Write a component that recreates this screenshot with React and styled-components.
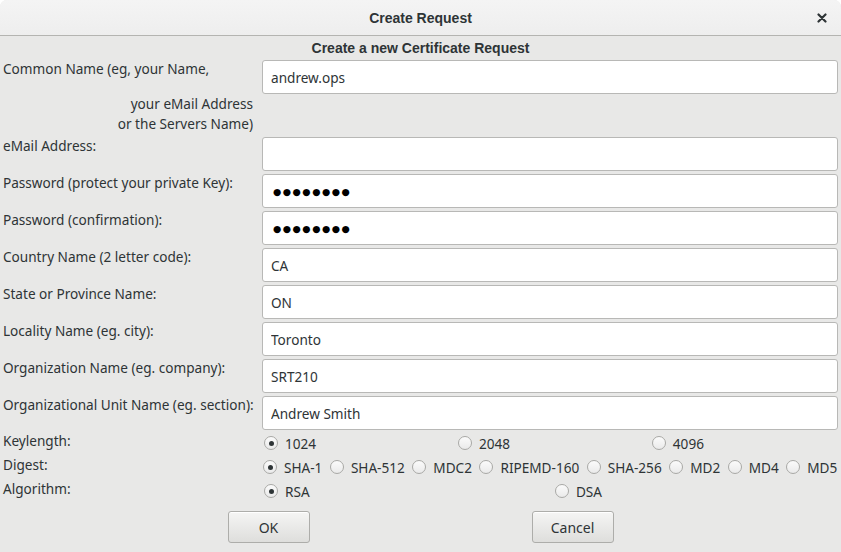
import styled, { createGlobalStyle } from "styled-components"

const Global = createGlobalStyle`
  html, body {
    margin: 0;
    padding: 0;
    background: #ffffff;
  }
  * { box-sizing: border-box; }
`

const Window = styled.div`
  width: 841px;
  height: 552px;
  background: #e8e8e7;
  border-radius: 7px 7px 0 0;
  overflow: hidden;
  font-family: "Noto Sans", "DejaVu Sans", sans-serif;
  font-size: 13.6px;
  color: #2e3436;
  display: flex;
  flex-direction: column;
`

const TitleBar = styled.div`
  height: 36px;
  flex: none;
  background: linear-gradient(#f4f4f4, #eeeeee);
  border-bottom: 1px solid #b4b4b1;
  display: grid;
  grid-template-columns: 1fr auto 1fr;
  align-items: center;
`

const Title = styled.div`
  grid-column: 2;
  font-family: "Liberation Sans", sans-serif;
  font-weight: bold;
  font-size: 14px;
  color: #2e3436;
`

const CloseButton = styled.div`
  grid-column: 3;
  justify-self: end;
  margin-right: 14px;
  display: flex;
  align-items: center;
`

const Heading = styled.div`
  text-align: center;
  font-family: "Liberation Sans", sans-serif;
  font-weight: bold;
  font-size: 14px;
  line-height: 18px;
  padding-top: 3px;
  margin-bottom: 3px;
`

const Form = styled.div`
  display: grid;
  grid-template-columns: 262px 1fr;
  row-gap: 3px;
  padding-right: 3px;
`

const Label = styled.div`
  padding-left: 3px;
  line-height: 17px;
  white-space: nowrap;
`

const LabelMore = styled.div`
  text-align: right;
  padding-right: 9px;
  line-height: 20px;
  margin-top: ${(p) => p.$gap || 0}px;
`

const Field = styled.input`
  height: 34px;
  width: 100%;
  border: 1px solid #b8b8b6;
  border-radius: 3px;
  background: #ffffff;
  padding: 0 ${(p) => (p.$secret ? "10px" : "8px")};
  font-family: ${(p) => (p.$secret ? `"DejaVu Sans"` : `"Noto Sans", "DejaVu Sans"`)}, sans-serif;
  font-size: ${(p) => (p.$secret ? "9.5px" : "13.6px")};
  letter-spacing: ${(p) => (p.$secret ? "1.5px" : "0")};
  color: ${(p) => (p.$secret ? "#000000" : "#2e3436")};
  outline: none;
`

const Options = styled.div`
  display: grid;
  grid-template-columns: 262px 1fr;
  grid-auto-rows: 24px;
  margin-top: 1px;
  padding-right: 3px;
`

const OptionLabel = styled.div`
  padding-left: 3px;
  line-height: 18px;
  align-self: start;
  padding-top: 1px;
`

const Choices = styled.div`
  display: ${(p) => (p.$cols ? "grid" : "flex")};
  grid-template-columns: ${(p) => (p.$cols ? `repeat(${p.$cols}, 1fr)` : "none")};
  align-items: center;
`

const Choice = styled.label`
  display: flex;
  align-items: center;
  gap: 7px;
  padding-left: ${(p) => (p.$packed ? 0 : 1)}px;
  margin-right: ${(p) => (p.$packed ? 6.5 : 0)}px;
  white-space: nowrap;
`

const Radio = styled.span`
  width: 14px;
  height: 14px;
  flex: none;
  border-radius: 50%;
  border: 1px solid #a9a9a6;
  background: linear-gradient(#fbfbfb, #eaeaea);
  display: flex;
  align-items: center;
  justify-content: center;
  margin-left: 1px;
  &::after {
    content: "";
    width: 5px;
    height: 5px;
    border-radius: 50%;
    background: #2e3436;
    display: ${(p) => (p.$on ? "block" : "none")};
  }
`

const Buttons = styled.div`
  width: 608px;
  margin: 8px auto 0;
  display: grid;
  grid-template-columns: 1fr 1fr;
  justify-items: center;
`

const Button = styled.button`
  width: 82px;
  height: 32px;
  border: 1px solid #adadaa;
  border-radius: 3px;
  background: linear-gradient(#f5f5f4, #dededc);
  font-family: "Noto Sans", "DejaVu Sans", sans-serif;
  font-size: 14px;
  color: #2e3436;
  box-shadow: inset 0 1px #ffffff;
  padding: 0;
`

const DOTS = "\u25CF".repeat(8)

const fields = [
  ["eMail Address:", ""],
  ["Password (protect your private Key):", DOTS, true],
  ["Password (confirmation):", DOTS, true],
  ["Country Name (2 letter code):", "CA"],
  ["State or Province Name:", "ON"],
  ["Locality Name (eg. city):", "Toronto"],
  ["Organization Name (eg. company):", "SRT210"],
  ["Organizational Unit Name (eg. section):", "Andrew Smith"],
]

const digests = ["SHA-1", "SHA-512", "MDC2", "RIPEMD-160", "SHA-256", "MD2", "MD4", "MD5"]

const App = () => {
  return (
    <Window>
      <Global />
      <TitleBar>
        <Title>Create Request</Title>
        <CloseButton>
          <svg width="10" height="10" viewBox="0 0 10 10">
            <path d="M1.5 1.5 L8.5 8.5 M8.5 1.5 L1.5 8.5" stroke="#2e3436" strokeWidth="2.2" strokeLinecap="round" />
          </svg>
        </CloseButton>
      </TitleBar>
      <Heading>Create a new Certificate Request</Heading>
      <Form>
        <Label>
          Common Name (eg, your Name,
          <LabelMore $gap={17}>your eMail Address</LabelMore>
          <LabelMore>or the Servers Name)</LabelMore>
        </Label>
        <div>
          <Field readOnly value="andrew.ops" />
        </div>
        {fields.map(([label, value, secret]) => (
          <>
            <Label key={label}>{label}</Label>
            <Field key={label + "f"} readOnly $secret={secret} value={value} />
          </>
        ))}
      </Form>
      <Options>
        <OptionLabel>Keylength:</OptionLabel>
        <Choices $cols={3}>
          <Choice><Radio $on />1024</Choice>
          <Choice><Radio />2048</Choice>
          <Choice><Radio />4096</Choice>
        </Choices>
        <OptionLabel>Digest:</OptionLabel>
        <Choices>
          {digests.map((d, i) => (
            <Choice key={d} $packed>
              <Radio $on={i === 0} />
              {d}
            </Choice>
          ))}
        </Choices>
        <OptionLabel>Algorithm:</OptionLabel>
        <Choices $cols={2}>
          <Choice><Radio $on />RSA</Choice>
          <Choice><Radio />DSA</Choice>
        </Choices>
      </Options>
      <Buttons>
        <Button>OK</Button>
        <Button>Cancel</Button>
      </Buttons>
    </Window>
  )
}

export default App
